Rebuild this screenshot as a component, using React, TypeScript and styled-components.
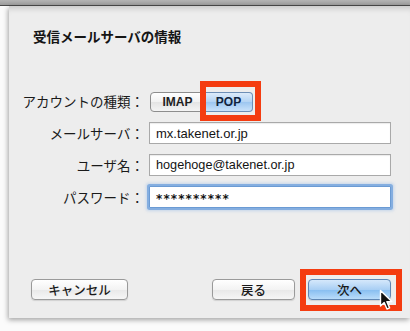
import React from "react";
import styled, { createGlobalStyle, css } from "styled-components";

const GlobalStyle = createGlobalStyle`
	html, body {
		margin: 0;
		padding: 0;
		background: #fbfbfb;
		width: 410px;
		height: 331px;
		overflow: hidden;
	}
	* {
		box-sizing: border-box;
	}
`;

const jp = `"Noto Sans CJK JP", "Noto Sans", sans-serif`;
const latin = `"Liberation Sans", "Noto Sans CJK JP", sans-serif`;

const App = () => {
	return (
		<Page>
			<GlobalStyle />
			<TitleBar />
			<Stage>
				<Sheet>
					<Title>受信メールサーバの情報</Title>

					<Form>
						<Label>アカウントの種類：</Label>
						<SegmentRow>
							<Segment>IMAP</Segment>
							<Highlight>
								<Segment selected>POP</Segment>
								<RedBox style={{ left: -5, right: -8, top: -11, bottom: -9 }} />
							</Highlight>
						</SegmentRow>

						<Label>メールサーバ：</Label>
						<Field>mx.takenet.or.jp</Field>

						<Label>ユーザ名：</Label>
						<Field narrow>hogehoge@takenet.or.jp</Field>

						<Label>パスワード：</Label>
						<Field focused>
							<Secret>**********</Secret>
						</Field>
					</Form>

					<Space />

					<Footer>
						<Button wide>キャンセル</Button>
						<Grow />
						<Button>戻る</Button>
						<Highlight>
							<Button primary>次へ</Button>
							<RedBox style={{ left: -8, right: -11, top: -10, bottom: -11 }} />
							<Cursor width='16' height='22' viewBox='0 0 16 22'>
								<path
									d='M1.5 1.5 L1.5 17 L5.2 13.6 L8 20 L10.6 18.9 L7.9 12.6 L12.8 12.6 Z'
									fill='#111'
									stroke='#fff'
									strokeWidth='1.4'
									strokeLinejoin='round'
								/>
							</Cursor>
						</Highlight>
					</Footer>
				</Sheet>
			</Stage>
		</Page>
	);
};

export default App;

const Page = styled.div`
	width: 410px;
	height: 331px;
	display: flex;
	flex-direction: column;
	background: #fbfbfb;
	overflow: hidden;
`;

const TitleBar = styled.div`
	height: 6px;
	flex-shrink: 0;
	background: linear-gradient(#b4b4b4, #9c9c9c);
	border-bottom: 1px solid #4a4a4a;
`;

const Stage = styled.div`
	display: flex;
	padding-left: 9px;
	height: 312px;
	flex-shrink: 0;
`;

const Sheet = styled.div`
	flex: 1;
	display: flex;
	flex-direction: column;
	background: #ededed;
	box-shadow: -1px 2px 5px rgba(0, 0, 0, 0.35),
		inset 0 7px 6px -5px rgba(0, 0, 0, 0.18);
	padding: 21px 19px 18px 0;
`;

const Title = styled.div`
	font-family: ${jp};
	font-weight: 700;
	font-size: 13.5px;
	line-height: 18px;
	color: #151515;
	padding-left: 24px;
`;

const Form = styled.div`
	display: grid;
	grid-template-columns: 135px 242px;
	grid-template-rows: repeat(4, 22px);
	column-gap: 5px;
	row-gap: 10px;
	margin-top: 45px;
	align-items: center;
`;

const Label = styled.div`
	font-family: ${jp};
	font-size: 13.5px;
	line-height: 18px;
	color: #1a1a1a;
	text-align: right;
	white-space: nowrap;
`;

const SegmentRow = styled.div`
	display: flex;
	align-self: end;
	padding-left: 1px;
`;

const Highlight = styled.div`
	position: relative;
	display: flex;
`;

const RedBox = styled.div`
	position: absolute;
	border: 6px solid #f43c10;
	pointer-events: none;
`;

const Segment = styled.div<{ selected?: boolean }>`
	height: 20px;
	display: flex;
	align-items: center;
	justify-content: center;
	font-family: ${latin};
	font-weight: 700;
	font-size: 12px;
	color: #1e1e1e;
	border: 1px solid #8d8d8d;
	${({ selected }) =>
		selected
			? css`
					width: 48px;
					border-left: none;
					border-color: #6e8fb6;
					border-radius: 0 4px 4px 0;
					background: linear-gradient(#dcebfa, #b3d3f3 50%, #9cc6f0 51%, #c9e2fa);
					color: #10233d;
			  `
			: css`
					width: 55px;
					border-radius: 4px 0 0 4px;
					background: linear-gradient(#ffffff, #f1f1f1 50%, #e4e4e4 51%, #f4f4f4);
			  `}
`;

const Field = styled.div<{ focused?: boolean; narrow?: boolean }>`
	height: 22px;
	display: flex;
	align-items: center;
	padding-left: 6px;
	background: #ffffff;
	border: 1px solid #a9a9a9;
	box-shadow: inset 0 1px 1px rgba(0, 0, 0, 0.08);
	font-family: ${latin};
	font-size: ${({ narrow }) => (narrow ? "12.7px" : "13px")};
	color: #141414;
	${({ focused }) =>
		focused &&
		css`
			border-color: #6b9bd4;
			box-shadow: 0 0 0 2px rgba(110, 160, 220, 0.75), 0 0 3px 3px rgba(120, 170, 230, 0.35);
			border-radius: 1px;
		`}
`;

const Secret = styled.span`
	font-family: "DejaVu Sans", sans-serif;
	font-size: 12px;
	letter-spacing: 1.1px;
	font-weight: 700;
	margin-top: 3px;
`;

const Space = styled.div`
	flex: 1;
`;

const Footer = styled.div`
	display: flex;
	align-items: center;
	padding-left: 22px;
	gap: 13px;
`;

const Grow = styled.div`
	flex: 1;
`;

const Button = styled.div<{ primary?: boolean; wide?: boolean }>`
	width: ${({ wide }) => (wide ? "97px" : "83px")};
	height: 21px;
	display: flex;
	align-items: center;
	justify-content: center;
	border-radius: 4px;
	font-family: ${jp};
	font-size: 12.5px;
	font-weight: 500;
	color: #1a1a1a;
	border: 1px solid ${({ primary }) => (primary ? "#5f86b3" : "#9a9a9a")};
	box-shadow: 0 1px 1px rgba(0, 0, 0, 0.12);
	background: ${({ primary }) =>
		primary
			? "linear-gradient(#d5e8fb, #a9cff4 50%, #86bdf0 51%, #b9dcfa)"
			: "linear-gradient(#ffffff, #f3f3f3 50%, #e8e8e8 51%, #f6f6f6)"};
`;

const Cursor = styled.svg`
	position: absolute;
	left: 71px;
	top: 10px;
	pointer-events: none;
`;
